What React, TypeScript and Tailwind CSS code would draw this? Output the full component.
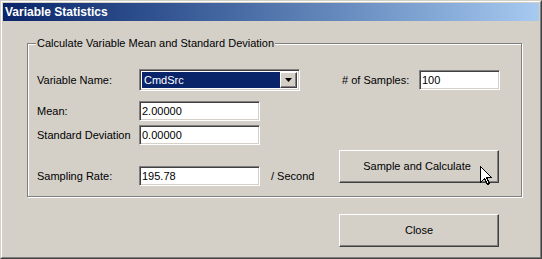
import React from 'react';

const sunken =
  'border border-t-[#808080] border-l-[#808080] border-b-white border-r-white shadow-[inset_1px_1px_0_#404040,inset_-1px_-1px_0_#d4d0c8]';
const raised =
  'border border-t-white border-l-white border-b-[#404040] border-r-[#404040] shadow-[inset_-1px_-1px_0_#808080]';

function TextBox({ value, width }: { value: string; width: string }) {
  return (
    <div className={`${sunken} ${width} h-[20px] bg-white flex items-center pl-[2px]`}>
      {value}
    </div>
  );
}

function Cursor() {
  return (
    <svg width="13" height="20" viewBox="0 0 13 20" className="absolute left-[140px] top-[15px]">
      <path
        d="M0.5 0.5 L0.5 16.5 L4.5 12.5 L7.5 18.5 L9.5 17.5 L6.5 11.5 L11.5 11.5 Z"
        fill="white"
        stroke="black"
        strokeWidth="1"
        shapeRendering="crispEdges"
      />
    </svg>
  );
}

export default function App() {
  return (
    <div className="w-[542px] h-[259px] bg-[#d4d0c8] border border-t-[#d4d0c8] border-l-[#d4d0c8] border-r-[#404040] border-b-[#404040] font-['Liberation_Sans',Arial,sans-serif] text-[11px] text-black">
      <div className="h-full border border-t-white border-l-white border-r-[#808080] border-b-[#808080] p-px flex flex-col">
        <div className="h-[18px] bg-linear-to-r from-[#0a246a] to-[#a6caf0] flex items-center pl-[2px] text-white font-bold text-[12px]">
          Variable Statistics
        </div>

        <div className="pl-[24px] pt-[22px]">
          {/* group box */}
          <div className="relative w-[495px] h-[154px] border border-[#808080] shadow-[inset_1px_1px_0_#fff,1px_1px_0_#fff] pl-[9px] pt-[25px]">
            <div className="absolute left-[8px] -top-[7px] bg-[#d4d0c8] px-px leading-[13px]">
              Calculate Variable Mean and Standard Deviation
            </div>

            <div className="flex items-center h-[22px]">
              <div className="w-[102px]">Variable Name:</div>
              <div className={`${sunken} w-[161px] h-[22px] bg-white flex items-stretch p-[2px]`}>
                <div className="flex-1 bg-[#0a246a] text-white flex items-center pl-[2px]">CmdSrc</div>
                <div className={`${raised} w-[17px] bg-[#d4d0c8] flex items-center justify-center`}>
                  <svg width="7" height="4" viewBox="0 0 7 4">
                    <path d="M0 0 H7 L3.5 4 Z" fill="black" />
                  </svg>
                </div>
              </div>
              <div className="ml-[42px] w-[77px]"># of Samples:</div>
              <TextBox value="100" width="w-[81px]" />
            </div>

            <div className="flex items-center mt-[10px]">
              <div className="w-[102px]">Mean:</div>
              <TextBox value="2.00000" width="w-[121px]" />
            </div>

            <div className="flex items-center mt-[4px]">
              <div className="w-[102px]">Standard Deviation</div>
              <TextBox value="0.00000" width="w-[121px]" />
            </div>

            <div className="flex items-start mt-[5px]">
              <div className="w-[302px] flex items-center mt-[16px]">
                <div className="w-[102px]">Sampling Rate:</div>
                <TextBox value="195.78" width="w-[121px]" />
                <div className="ml-[11px]">/ Second</div>
              </div>
              <div className={`${raised} relative w-[160px] h-[33px] flex items-center justify-center pr-[4px]`}>
                Sample and Calculate
                <Cursor />
              </div>
            </div>
          </div>

          <div className="flex mt-[17px] pl-[312px]">
            <div className={`${raised} w-[160px] h-[33px] flex items-center justify-center`}>Close</div>
          </div>
        </div>
      </div>
    </div>
  );
}
